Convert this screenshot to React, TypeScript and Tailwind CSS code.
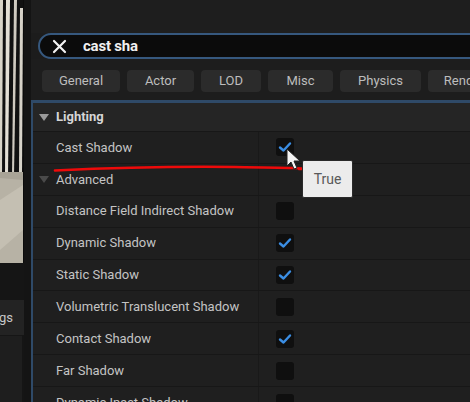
import React from "react";

type Row = { label: string; checked?: boolean; group?: boolean };

const rows: Row[] = [
  { label: "Cast Shadow", checked: true },
  { label: "Advanced", group: true },
  { label: "Distance Field Indirect Shadow", checked: false },
  { label: "Dynamic Shadow", checked: true },
  { label: "Static Shadow", checked: true },
  { label: "Volumetric Translucent Shadow", checked: false },
  { label: "Contact Shadow", checked: true },
  { label: "Far Shadow", checked: false },
  { label: "Dynamic Inset Shadow", checked: false },
];

const filters = [
  { name: "General", w: "w-[78px]" },
  { name: "Actor", w: "w-[67px]" },
  { name: "LOD", w: "w-[60px]" },
  { name: "Misc", w: "w-[65px]" },
  { name: "Physics", w: "w-[81px]" },
  { name: "Rendering", w: "w-[90px]" },
];

function Caret({ dim }: { dim?: boolean }) {
  return (
    <svg width="10" height="7" viewBox="0 0 10 7" className="shrink-0">
      <path d="M0 0 L10 0 L5 7 Z" fill={dim ? "#4a4a4a" : "#9a9a9a"} />
    </svg>
  );
}

function Checkbox({ checked }: { checked?: boolean }) {
  return (
    <div className="w-[18px] h-[18px] rounded-[3px] bg-[#0f0f0f] flex items-center justify-center">
      {checked && (
        <svg width="14" height="12" viewBox="0 0 14 12">
          <path
            d="M2 6.5 L5.5 9.5 L12 2.5"
            fill="none"
            stroke="#3b8ee4"
            strokeWidth="2.4"
            strokeLinecap="round"
            strokeLinejoin="round"
          />
        </svg>
      )}
    </div>
  );
}

function Viewport() {
  return (
    <svg width="24" height="263" viewBox="0 0 24 263" className="block shrink-0">
      <rect width="24" height="263" fill="#111" />
      <path d="M0 0 L3 0 L2 175 L0 175 Z" fill="#d8d4c8" />
      <path d="M6 0 L10 0 L8 175 L5 175 Z" fill="#e4e0d6" />
      <path d="M14 0 L17 0 L14 175 L12 175 Z" fill="#cfcac0" />
      <path d="M20 8 L23 8 L22 172 L19 172 Z" fill="#d6d2c8" />
      <rect x="0" y="172" width="23" height="91" fill="#b7b2a5" />
      <path d="M0 200 L23 185 L23 230 L0 250 Z" fill="#c4bfb2" />
      <path d="M0 172 L23 172 L23 180 L0 178 Z" fill="#a9a497" />
      <rect x="23" y="0" width="1" height="263" fill="#0c0c0c" />
    </svg>
  );
}

export default function App() {
  return (
    <div
      className="w-[470px] h-[402px] overflow-hidden flex bg-[#151515] relative"
      style={{ fontFamily: "Roboto, 'Noto Sans', sans-serif" }}
    >
      {/* left pane */}
      <div className="w-[24px] shrink-0 flex flex-col overflow-hidden">
        <Viewport />
        <div className="h-[37px] shrink-0 bg-[#151515]" />
        <div className="h-[35px] shrink-0 bg-[#232323] flex items-center justify-end pr-[13px] text-[13px] text-[#c8c8c8] -mr-[2px]">
          <span>gs</span>
        </div>
        <div className="flex-1 bg-[#1e1e1e] border-t border-[#161616] mr-[2px]" />
      </div>
      <div className="w-[7px] shrink-0 bg-[#141414]" />

      {/* details panel */}
      <div className="flex-1 flex flex-col bg-[#1c1c1c] min-w-0 overflow-hidden">
        <div className="h-[33px] shrink-0 bg-[#1e1e1e]" />
        <div className="ml-[7px] -mr-[30px] h-[26px] shrink-0 rounded-full border-2 border-[#36587e] bg-[#0b0b0b] flex items-center pl-[12px] gap-[16px]">
          <svg width="15" height="15" viewBox="0 0 15 15">
            <path d="M2 2 L13 13 M13 2 L2 13" stroke="#f2f2f2" strokeWidth="2.2" strokeLinecap="round" />
          </svg>
          <span className="text-[15px] font-bold text-[#f0f0f0] tracking-[-0.2px]">cast sha</span>
        </div>
        <div className="h-[41px] shrink-0 flex items-center gap-[7px] pl-[11px] pt-[2px] bg-[#1d1d1d] whitespace-nowrap">
          {filters.map((f) => (
            <div
              key={f.name}
              className={`${f.w} h-[22px] shrink-0 rounded-[4px] bg-[#2b2b2b] flex items-center justify-center text-[13px] text-[#bdbdbd]`}
            >
              {f.name}
            </div>
          ))}
        </div>

        <div className="flex-1 border-t-[3px] border-l-[2px] border-[#2f4a68] bg-[#1f1f1f] flex flex-col">
          <div className="h-[29px] shrink-0 bg-[#252525] flex items-center gap-[7px] pl-[6px] border-b border-[#171717]">
            <Caret />
            <span className="text-[13px] font-bold text-[#d6d6d6]">Lighting</span>
          </div>
          {rows.map((r) => (
            <div
              key={r.label}
              className="h-[31.9px] shrink-0 flex border-b border-[#171717] bg-[#1f1f1f]"
            >
              <div className="w-[226px] shrink-0 flex items-center pl-[6px] gap-[7px] border-r border-[#191919]">
                {r.group ? <Caret dim /> : <div className="w-[10px] shrink-0" />}
                <span className="text-[13px] text-[#c4c4c4] whitespace-nowrap">{r.label}</span>
              </div>
              <div className="flex items-center pl-[17px]">
                {!r.group && <Checkbox checked={r.checked} />}
              </div>
            </div>
          ))}
        </div>
      </div>

      {/* red annotation line */}
      <svg
        className="absolute left-0 top-0 pointer-events-none"
        width="470"
        height="402"
        viewBox="0 0 470 402"
      >
        <path
          d="M55 170.5 Q 150 166 235 167 T 299 169"
          fill="none"
          stroke="#ee0a0a"
          strokeWidth="2.6"
          strokeLinecap="round"
        />
      </svg>

      {/* cursor */}
      <svg
        className="absolute left-[286px] top-[148px] pointer-events-none"
        width="16"
        height="24"
        viewBox="0 0 16 24"
      >
        <path
          d="M1 1 L1 18 L5 14 L8 21 L11 20 L8 13 L14 13 Z"
          fill="#f4f4f4"
          stroke="#222"
          strokeWidth="1"
          strokeLinejoin="round"
        />
      </svg>

      {/* tooltip */}
      <div className="absolute left-[302px] top-[160px] w-[51px] h-[38px] bg-[#ececec] border border-[#2a2a2a] rounded-[2px] flex items-center justify-center text-[14px] text-[#595959]">
        True
      </div>
    </div>
  );
}
